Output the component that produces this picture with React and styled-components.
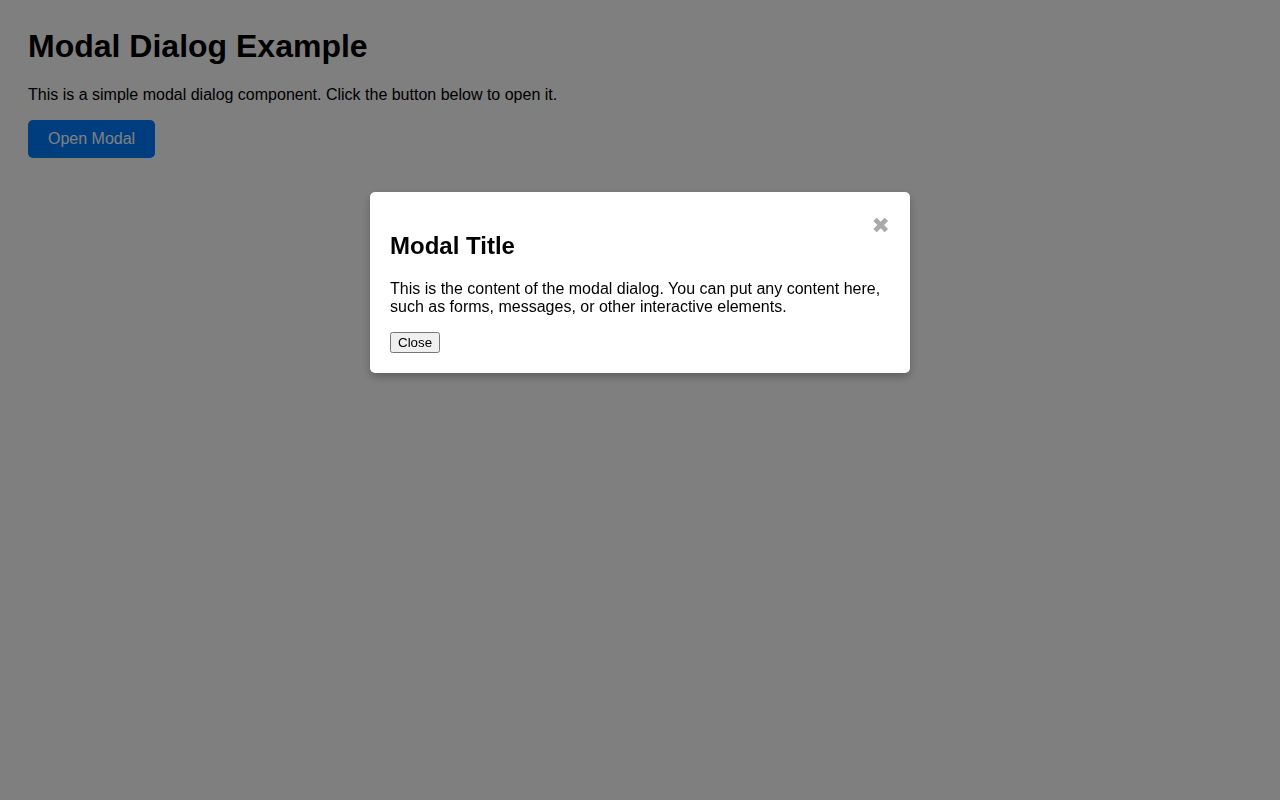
import React, { useState } from "react";
import styled, { createGlobalStyle } from "styled-components";

const GlobalStyle = createGlobalStyle`
  body {
    margin: 8px;
    background: #ffffff;
    font-family: "Liberation Sans", Arial, sans-serif;
    color: #000;
  }
`;

const Page = styled.div`
  padding: 20px;
`;

const Heading = styled.h1`
  font-size: 32px;
  margin: 0 0 21px;
`;

const Intro = styled.p`
  font-size: 16px;
  margin: 0 0 16px;
`;

const OpenButton = styled.button`
  background: #007bff;
  color: #fff;
  border: none;
  border-radius: 5px;
  padding: 10px 20px;
  font-family: "Liberation Sans", Arial, sans-serif;
  font-size: 16px;
  cursor: pointer;
`;

const Overlay = styled.div`
  position: fixed;
  inset: 0;
  background: rgba(0, 0, 0, 0.5);
  overflow: auto;
`;

const Dialog = styled.div`
  width: 500px;
  margin: 15% auto 0;
  padding: 20px;
  background: #fff;
  border-radius: 5px;
  box-shadow: 0 4px 8px rgba(0, 0, 0, 0.25);
`;

const CloseIcon = styled.span`
  float: right;
  color: #aaa;
  font-family: "DejaVu Sans", sans-serif;
  font-size: 22px;
  font-weight: bold;
  line-height: 28px;
  cursor: pointer;
`;

const Title = styled.h2`
  font-size: 24px;
  margin: 20px 0;
`;

const Body = styled.p`
  font-size: 16px;
  margin: 0 0 16px;
`;

const CloseButton = styled.button`
  font-family: "Liberation Sans", Arial, sans-serif;
  font-size: 13.33px;
  padding: 1px 6px;
`;

export default function App() {
  const [open, setOpen] = useState(true);

  return (
    <>
      <GlobalStyle />
      <Page>
        <Heading>Modal Dialog Example</Heading>
        <Intro>
          This is a simple modal dialog component. Click the button below to
          open it.
        </Intro>
        <OpenButton onClick={() => setOpen(true)}>Open Modal</OpenButton>
      </Page>
      {open && (
        <Overlay>
          <Dialog>
            <CloseIcon onClick={() => setOpen(false)}>✖</CloseIcon>
            <Title>Modal Title</Title>
            <Body>
              This is the content of the modal dialog. You can put any content
              here, such as forms, messages, or other interactive elements.
            </Body>
            <CloseButton onClick={() => setOpen(false)}>Close</CloseButton>
          </Dialog>
        </Overlay>
      )}
    </>
  );
}
